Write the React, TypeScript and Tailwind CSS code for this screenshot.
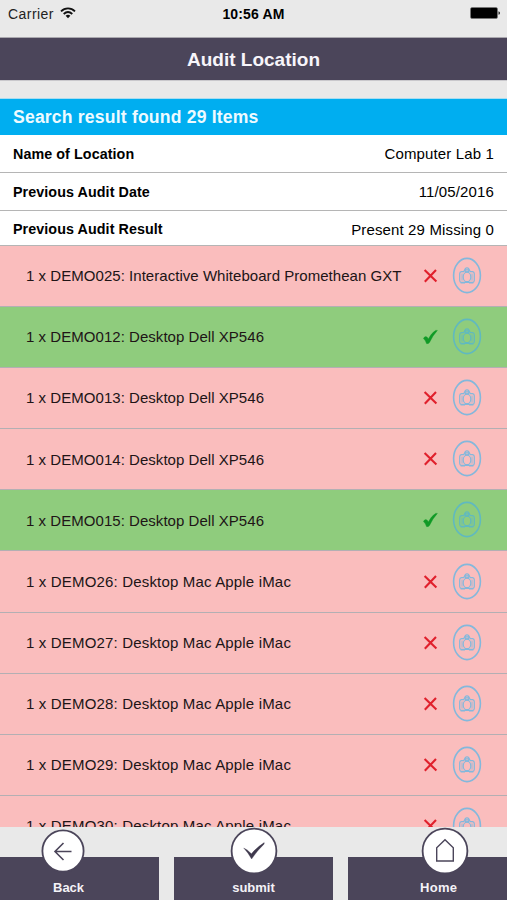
import * as React from "react";

const DETAILS = [
  { label: "Name of Location", value: "Computer Lab 1", row: "h-[38px] pt-[2px]" },
  { label: "Previous Audit Date", value: "11/05/2016", row: "h-[38px] pt-[2px]" },
  { label: "Previous Audit Result", value: "Present 29 Missing 0", row: "h-[35px] pt-[4px]" },
];

const ITEMS = [
  { name: "1 x DEMO025: Interactive Whiteboard Promethean GXT", present: false },
  { name: "1 x DEMO012: Desktop Dell XP546", present: true },
  { name: "1 x DEMO013: Desktop Dell XP546", present: false },
  { name: "1 x DEMO014: Desktop Dell XP546", present: false },
  { name: "1 x DEMO015: Desktop Dell XP546", present: true },
  { name: "1 x DEMO26: Desktop Mac Apple iMac", present: false },
  { name: "1 x DEMO27: Desktop Mac Apple iMac", present: false },
  { name: "1 x DEMO28: Desktop Mac Apple iMac", present: false },
  { name: "1 x DEMO29: Desktop Mac Apple iMac", present: false },
  { name: "1 x DEMO30: Desktop Mac Apple iMac", present: false },
];

function WifiIcon() {
  return (
    <svg className="w-4 h-3" viewBox="0 0 16 12" fill="none" stroke="#111" strokeWidth="1.8">
      <path d="M1 4.3C5 .3 11 .3 15 4.3" />
      <path d="M3.7 7C6.3 4.6 9.7 4.6 12.3 7" />
      <path d="M8 11.2 5.6 8.8Q8 6.9 10.4 8.8Z" fill="#111" stroke="none" />
    </svg>
  );
}

function BatteryIcon() {
  return (
    <svg className="w-[31px] h-3" viewBox="0 0 31 12">
      <rect x=".5" y=".5" width="27" height="11" rx="1.5" fill="#000" stroke="#777" strokeWidth=".6" />
      <path d="M28.5 4.2Q30 4.6 30 6T28.5 7.8Z" fill="#222" />
    </svg>
  );
}

function CrossIcon() {
  return (
    <svg className="w-5 h-5" viewBox="0 0 20 20" fill="none" stroke="#e0202c" strokeWidth="2.1">
      <path d="M4.6 4 16.4 15.6M16 4 4.8 15.8" />
    </svg>
  );
}

function TickIcon() {
  return (
    <svg className="w-5 h-5" viewBox="0 0 20 20" fill="#109a26">
      <path d="M3.4 11.3Q5 8.8 7 10Q7.8 10.8 8.3 12Q11.2 6.2 15.6 3.4H17.4Q12.8 8.3 9.5 15.4Q8.3 17 6.5 16.6Q5.4 13.2 3.4 11.3Z" stroke="#109a26" strokeWidth=".4" />
    </svg>
  );
}

function CameraIcon({ present }: { present: boolean }) {
  return (
    <svg
      className="w-[30px] h-[38px]"
      viewBox="0 0 30 38"
      fill="none"
      stroke={present ? "#60b9c0" : "#83b8dc"}
      strokeWidth="1.2"
    >
      <ellipse cx="15" cy="18.5" rx="13.4" ry="17.1" strokeWidth="1.6" />
      <path d="M9.5 14.7H11.7L12.7 12.8H17.3L18.3 14.7H20.5Q22.3 15 22.3 16.7V23.4Q22.3 25.2 20.5 25.3H9.5Q7.7 25.2 7.7 23.4V16.7Q7.7 15 9.5 14.7Z" />
      <ellipse cx="15" cy="19.9" rx="3.8" ry="4.8" />
      <circle cx="15" cy="12.9" r="2" />
      <path d="M8.6 25.7H13M17 25.7H21.4" strokeWidth="1.5" />
      <path d="M10 16.5V23.6M20 16.5V23.6" strokeWidth=".8" />
    </svg>
  );
}

function BackIcon() {
  return (
    <svg className="w-11 h-11" viewBox="0 0 44 44" fill="none">
      <circle cx="22" cy="22" r="20.6" fill="#fff" stroke="#4b455a" strokeWidth="1.8" />
      <path d="M30.5 22.5H14.2M22.5 14 14 22.5 22.5 31" stroke="#4b455a" strokeWidth="1.6" />
    </svg>
  );
}

function SubmitIcon() {
  return (
    <svg className="w-12 h-12" viewBox="0 0 48 48" fill="none">
      <circle cx="24" cy="24" r="22.4" fill="#fff" stroke="#4b455a" strokeWidth="1.8" />
      <path d="M13.7 21 17.2 22.9 21.4 26.8Q26.5 20.4 34.2 15.6V16.9Q27.2 23.6 21.6 32Q18.4 26 13.7 21Z" fill="#3f394d" stroke="#3f394d" strokeWidth=".3" />
    </svg>
  );
}

function HomeIcon() {
  return (
    <svg className="w-12 h-12" viewBox="0 0 48 48" fill="none">
      <circle cx="24" cy="24" r="22.4" fill="#fff" stroke="#4b455a" strokeWidth="1.8" />
      <path d="M15.7 34V20.8L24 12.7L32.3 20.8V34Z" stroke="#4b455a" strokeWidth="1.4" />
    </svg>
  );
}

export default function App() {
  return (
    <div className="w-[507px] h-[900px] flex flex-col overflow-hidden bg-[#e9e9e9] text-black font-['Liberation_Sans',Arial,sans-serif]">
      {/* Status bar */}
      <div className="h-[37px] shrink-0 grid grid-cols-3 items-start pt-1 pl-2 pr-[6px] text-[14px] leading-[20px]">
        <div className="flex items-center gap-[6px] h-5">
          <span className="tracking-[0.45px] text-[#222]">Carrier</span>
          <span className="pb-[3px]"><WifiIcon /></span>
        </div>
        <span className="text-center font-bold tracking-[0.15px] -ml-[2px]">10:56 AM</span>
        <div className="flex justify-end pt-[3px]">
          <BatteryIcon />
        </div>
      </div>

      {/* Header */}
      <header className="h-[44px] shrink-0 flex items-center justify-center pt-[2px] bg-[#4b455a] border-t border-b border-t-[#aaa8ae] border-b-[#c9c8cc]">
        <h1 className="text-[19px] font-bold text-[#f7f5fa]">Audit Location</h1>
      </header>

      <div className="mt-[17px] h-[37px] shrink-0 flex items-center px-[13px] bg-[#00aef0] border-t border-[#a9ddf1]">
        <h2 className="text-[17.6px] font-bold tracking-[0.18px] text-[#eefaff]">Search result found 29 Items</h2>
      </div>

      <div className="shrink-0 bg-white text-[14.3px]">
        {DETAILS.map((detail) => (
          <div key={detail.label} className={`${detail.row} flex items-center justify-between px-[13px] border-b border-[#b5b5b5]`}>
            <span className="font-bold tracking-[0.08px]">{detail.label}</span>
            <span className="text-[15px] tracking-[0.14px]">{detail.value}</span>
          </div>
        ))}
      </div>

      {/* Audited items */}
      <ul className="h-[581px] shrink-0 overflow-hidden">
        {ITEMS.map((item) => (
          <li
            key={item.name}
            className={`h-[61.1px] flex items-center pl-[26px] pr-[25px] border-b border-[#b3afb3] ${item.present ? "bg-[#8fcc7d]" : "bg-[#fabdbd]"}`}
          >
            <span
              className={`flex-1 pt-px whitespace-nowrap text-[15px] text-[#201416] ${item.name.endsWith("iMac") ? "tracking-[0.17px]" : "tracking-[0.04px]"}`}
            >
              {item.name}
            </span>
            {item.present ? <TickIcon /> : <CrossIcon />}
            <span className="ml-3">
              <CameraIcon present={item.present} />
            </span>
          </li>
        ))}
      </ul>

      {/* Bottom actions */}
      <footer className="flex-1 flex items-end gap-[15px] text-[13px] font-bold text-[#f4f2f7]">
        <button className="relative w-[159px] h-[43px] flex items-end pb-[3px] pl-[53px] bg-[#4b455a]">
          <span className="absolute left-[41px] -top-7"><BackIcon /></span>
          Back
        </button>
        <button className="relative w-[159px] h-[43px] flex items-end justify-center pb-[3px] bg-[#4b455a]">
          <span className="absolute left-[56px] -top-[30px]"><SubmitIcon /></span>
          submit
        </button>
        <button className="relative w-[159px] h-[43px] flex items-end pb-[3px] pl-[72px] tracking-[0.3px] bg-[#4b455a]">
          <span className="absolute left-[73px] -top-[30px]"><HomeIcon /></span>
          Home
        </button>
      </footer>
    </div>
  );
}
